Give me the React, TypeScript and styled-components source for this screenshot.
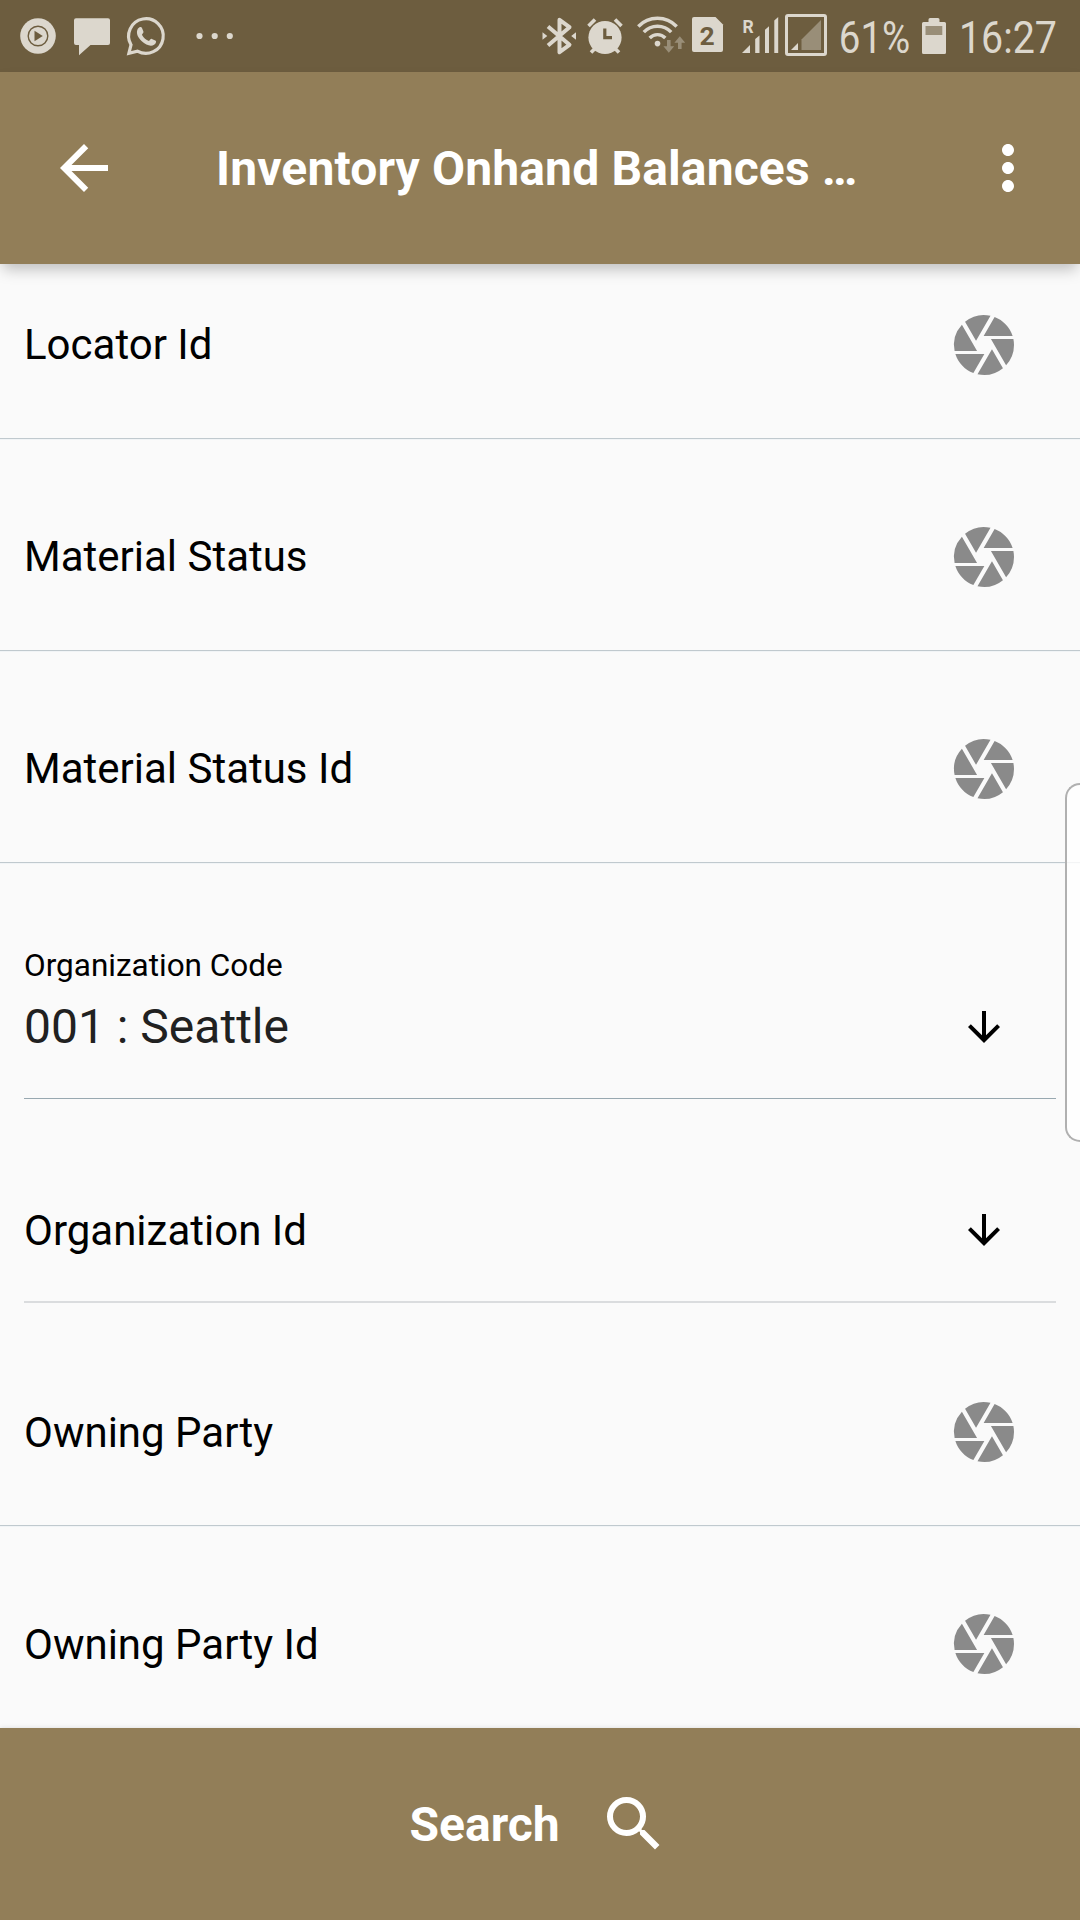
import React from "react";
import styled, { createGlobalStyle } from "styled-components";
import { MdArrowBack, MdArrowDownward, MdCamera, MdMoreVert, MdSearch } from "react-icons/md";

const FG = "#dcd7cd";
const DIM = "#998e78";
const STATUS_BG = "#6d5d3f";
const BRAND = "#927e58";

const GlobalStyle = createGlobalStyle`
  body {
    margin: 0;
    background: #fafafa;
    font-family: Roboto, "Noto Sans", sans-serif;
  }
  svg { display: block; flex: none; }
`;

const Screen = styled.div`
  display: flex;
  flex-direction: column;
  width: 1080px;
  height: 1920px;
  overflow: hidden;
  background: #fafafa;
`;

const StatusBar = styled.div`
  display: flex;
  justify-content: space-between;
  height: 72px;
  flex: none;
  background: ${STATUS_BG};
  color: ${FG};
`;

const StatusGroup = styled.div`
  display: flex;
  align-items: center;
`;

const StatusText = styled.span<{ $width: number; $scale: number }>`
  box-sizing: border-box;
  width: ${(p) => p.$width}px;
  font-size: 45px;
  line-height: 72px;
  white-space: nowrap;
  transform: scaleX(${(p) => p.$scale});
  transform-origin: left center;
  padding: 3px 0 0 1px;
`;

const AppBar = styled.header`
  display: flex;
  align-items: center;
  height: 192px;
  box-sizing: border-box;
  padding: 0 36px 0 48px;
  flex: none;
  background: ${BRAND};
  color: #fff;
  z-index: 1;
  box-shadow: 0 8px 14px -3px rgba(0, 0, 0, 0.25);
`;

const Title = styled.h1`
  flex: 1;
  margin: 2px 0 0 96px;
  font-size: 48px;
  font-weight: 700;
  line-height: 56px;
  letter-spacing: 0.14px;
  white-space: nowrap;
`;

const Viewport = styled.main`
  flex: 1;
  min-height: 0;
  overflow: hidden;
`;

const Fields = styled.div`
  margin-top: -37px;
`;

const ScanRow = styled.div`
  display: flex;
  align-items: center;
  justify-content: space-between;
  height: 72px;
  padding: 82px 60px 57px 24px;
  border-bottom: 1px solid #c0c9ce;
  box-shadow: 0 1px #f1f4f6;
  color: #8a8a8a;
`;

const PickerGroup = styled.div`
  padding: 0 24px 11px;
`;

const Picker = styled.div<{ $height: number; $bottom: number; $line: string }>`
  display: flex;
  flex-direction: column;
  justify-content: flex-end;
  box-sizing: border-box;
  height: ${(p) => p.$height}px;
  padding: 0 48px ${(p) => p.$bottom}px 0;
  border-bottom: ${(p) => p.$line};
`;

const PickerLine = styled.div`
  display: flex;
  align-items: center;
  justify-content: space-between;
  height: 56px;
`;

const Label = styled.span<{ $low?: boolean }>`
  margin-top: ${(p) => (p.$low ? 2 : 0)}px;
  font-size: 42px;
  line-height: 50px;
  color: #000;
`;

const Caption = styled.span`
  margin-bottom: 14px;
  font-size: 31.5px;
  line-height: 38px;
  color: #000;
`;

const Value = styled.span`
  font-size: 48px;
  line-height: 56px;
  color: #212121;
`;

const SearchBar = styled.button`
  display: flex;
  align-items: center;
  height: 192px;
  flex: none;
  border: 0;
  padding: 0 0 0 409.5px;
  gap: 38.5px;
  background: ${BRAND};
  color: #fff;
  font: 700 48px/56px Roboto, "Noto Sans", sans-serif;
  box-shadow: 0 0 5px rgba(0, 0, 0, 0.12);
  z-index: 1;
`;

const SearchText = styled.span`
  margin-top: 2px;
`;

const EdgeHandle = styled.div`
  position: absolute;
  left: 1065px;
  top: 783px;
  width: 15px;
  height: 359px;
  box-sizing: border-box;
  border: 2px solid #b0b0b0;
  border-right: 0;
  border-radius: 20px 0 0 20px;
  background: rgba(255, 255, 255, 0.8);
  z-index: 2;
`;

/* Status glyph: a 72px tall slice of the bar starting at `x`. */
function Glyph({ x, w, children }: { x: number; w: number; children: React.ReactNode }) {
  return (
    <svg width={w} height={72} viewBox={`${x} 0 ${w} 72`} fill={FG}>
      {children}
    </svg>
  );
}

function Notifications() {
  return (
    <StatusGroup>
      <Glyph x={0} w={64}>
        <circle cx="38" cy="36" r="17.8" />
        <circle cx="38" cy="36" r="9.8" fill="none" stroke={STATUS_BG} strokeWidth="1.4" />
        <path d="M34.5 30.8v10.4l8.3-5.2z" fill={STATUS_BG} />
      </Glyph>
      <Glyph x={64} w={56}>
        <path d="M76 18.3h32a2 2 0 0 1 2 2V43a2 2 0 0 1-2 2H90.5L79 55.2V45h-3a2 2 0 0 1-2-2V20.3a2 2 0 0 1 2-2z" />
      </Glyph>
      <Glyph x={120} w={60}>
        <path d="M131 44.8A17.3 17.3 0 1 1 137.4 51.1L128.9 53.3z" fill="none" stroke={FG} strokeWidth="3.2" />
        <path d="M137.3 30c.6-1.7 2.2-3.3 3.6-2.9.8.2 1.1 1 1.5 2l1 2.5c.3.9-.2 1.400-1.500 3.100 1.900 3.300 4 5.200 7.100 6.400 1.600-2 2-2.500 2.900-2.100l3.300 1.600c.9.500 1 .7.8 1.700-.5 2.200-3.100 3.500-5.200 3.400-2.500-.2-6.100-1.500-9.300-4.700-3-3-5.500-6.900-4.200-11z" />
      </Glyph>
      <Glyph x={180} w={60}>
        <circle cx="199.5" cy="36" r="3.1" />
        <circle cx="214.7" cy="36" r="3.1" />
        <circle cx="229.8" cy="36" r="3.1" />
      </Glyph>
    </StatusGroup>
  );
}

function Indicators() {
  return (
    <StatusGroup>
      <Glyph x={536} w={46}>
        <path d="M548 26.5L569.5 44.8 559.5 52.2V19.8L569.5 27.2 548 45.5" fill="none" stroke={FG} strokeWidth="4" strokeLinejoin="round" />
        <path d="M542.5 32.3l4.8 3.7-4.8 3.7zM576 32.3l-4.8 3.7 4.8 3.7z" />
      </Glyph>
      <Glyph x={582} w={50}>
        <circle cx="605" cy="37.5" r="16.6" />
        <path d="M588.5 26l6.5-6.5M621.5 26l-6.5-6.5M591 52.5l5-5M619 52.5l-5-5" stroke={FG} strokeWidth="3.6" />
        <path d="M604.8 28.5v9.2h7.2" fill="none" stroke={STATUS_BG} strokeWidth="3.2" />
      </Glyph>
      <Glyph x={632} w={56}>
        <g fill="none" stroke={FG} strokeWidth="3.4">
          <path d="M638.3 26.5a26.6 26.6 0 0 1 38.4 0" />
          <path d="M643.8 32.2a18.6 18.6 0 0 1 27.4 0" />
          <path d="M649.7 38a10.8 10.8 0 0 1 15.6 0" />
        </g>
        <circle cx="657.5" cy="43.6" r="2.8" />
        <path d="M667 40h3.6v6.2h3.6l-5.4 6.6-5.4-6.6h3.6zM678 49h3.6v-6.2h3.6l-5.4-6.6-5.4 6.6h3.6z" fill={DIM} />
      </Glyph>
      <Glyph x={688} w={48}>
        <path d="M694 17h21.5l7.5 7.5V50a2 2 0 0 1-2 2h-27a2 2 0 0 1-2-2V19a2 2 0 0 1 2-2z" />
        <text x="707" y="45" textAnchor="middle" fontSize="26.5" fontWeight="700" fill={STATUS_BG}>2</text>
      </Glyph>
      <Glyph x={736} w={46}>
        <text x="742.6" y="32.5" fontSize="17.5" fontWeight="700">R</text>
        <path d="M742 53l8-8v8zM755.2 39l4.3-3.5V53h-4.3zM765 29.8l4-3.6V53h-4zM774.3 20.5l3.9-3.5v36h-3.9z" />
      </Glyph>
      <Glyph x={782} w={56}>
        <rect x="786.5" y="15.5" width="39" height="39" rx="1.5" fill="none" stroke={FG} strokeWidth="3" />
        <path d="M791 50l7-7v7z" />
        <path d="M801.5 50V39.5L821 20v30z" fill={DIM} />
      </Glyph>
      <StatusText $width={80} $scale={0.855}>61%</StatusText>
      <Glyph x={918} w={40}>
        <path d="M923.5 22h5v-2.5q0-1.5 1.5-1.5h8q1.5 0 1.5 1.5V22h5q1.500 0 1.500 1.500v29q0 1.500-1.500 1.500h-21q-1.500 0-1.500-1.500v-29q0-1.500 1.500-1.500z" />
        <path d="M925.5 26h16.8v9h-16.8z" fill={DIM} />
      </Glyph>
      <StatusText $width={122} $scale={0.875}>16:27</StatusText>
    </StatusGroup>
  );
}

function ScanField({ label, low }: { label: string; low?: boolean }) {
  return (
    <ScanRow>
      <Label $low={low}>{label}</Label>
      <MdCamera size={72} />
    </ScanRow>
  );
}

export default function App() {
  return (
    <Screen>
      <GlobalStyle />
      <StatusBar>
        <Notifications />
        <Indicators />
      </StatusBar>
      <AppBar>
        <MdArrowBack size={72} />
        <Title>Inventory Onhand Balances …</Title>
        <MdMoreVert size={72} />
      </AppBar>
      <Viewport>
        <Fields>
          <ScanField label="Locator Id" />
          <ScanField label="Material Status" />
          <ScanField label="Material Status Id" />
          <PickerGroup>
            <Picker $height={236} $bottom={43} $line="1px solid #98a8b0">
              <Caption>Organization Code</Caption>
              <PickerLine>
                <Value>001 : Seattle</Value>
                <MdArrowDownward size={48} color="#000" />
              </PickerLine>
            </Picker>
            <Picker $height={204} $bottom={43} $line="2px solid #dadcde">
              <PickerLine>
                <Label $low>Organization Id</Label>
                <MdArrowDownward size={48} color="#000" />
              </PickerLine>
            </Picker>
          </PickerGroup>
          <ScanField label="Owning Party" low />
          <ScanField label="Owning Party Id" low />
        </Fields>
      </Viewport>
      <SearchBar>
        <SearchText>Search</SearchText>
        <MdSearch size={72} />
      </SearchBar>
      <EdgeHandle />
    </Screen>
  );
}
